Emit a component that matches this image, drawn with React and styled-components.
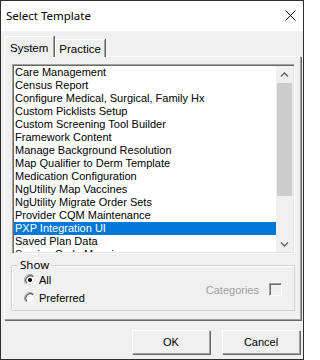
import React, { useState } from 'react';
import styled, { createGlobalStyle } from 'styled-components';

const templates = [
  'Care Management',
  'Census Report',
  'Configure Medical, Surgical, Family Hx',
  'Custom Picklists Setup',
  'Custom Screening Tool Builder',
  'Framework Content',
  'Manage Background Resolution',
  'Map Qualifier to Derm Template',
  'Medication Configuration',
  'NgUtility Map Vaccines',
  'NgUtility Migrate Order Sets',
  'Provider CQM Maintenance',
  'PXP Integration UI',
  'Saved Plan Data',
  'Service Code Mapping',
];

const GlobalStyle = createGlobalStyle`
  html, body {
    margin: 0;
    padding: 0;
    background: #ffffff;
  }
  * {
    box-sizing: border-box;
  }
`;

const Window = styled.div`
  width: 304px;
  height: 360px;
  border: 1px solid #2e2e2e;
  display: flex;
  flex-direction: column;
  background: #f0f0f0;
  font-family: 'Liberation Sans', Arial, sans-serif;
  font-size: 11px;
  color: #000;
  overflow: hidden;
`;

const TitleBar = styled.div`
  height: 30px;
  flex: 0 0 30px;
  background: #ffffff;
  display: flex;
  align-items: center;
  justify-content: space-between;
  padding: 0 7px 1px 5px;
`;

const Title = styled.span`
  font-family: 'Noto Sans', 'Open Sans', sans-serif;
  font-size: 11.5px;
  color: #000;
`;

const Body = styled.div`
  flex: 1;
  display: flex;
  flex-direction: column;
  padding: 5px 1px 0 3px;
`;

const TabStrip = styled.div`
  display: flex;
  align-items: flex-end;
  height: 21px;
  padding-left: 1px;
  position: relative;
  z-index: 1;
  margin-bottom: -1px;
`;

const Tab = styled.div`
  height: ${p => (p.$active ? '21px' : '18px')};
  padding: ${p => (p.$active ? '4px 5px 0 4px' : '2px 3px 0 3px')};
  background: #f0f0f0;
  border-top: 1px solid #ffffff;
  border-left: 1px solid #ffffff;
  border-right: 1px solid #a0a0a0;
  box-shadow: 1px 0 0 #696969;
  margin-right: 1px;
  font-size: 11.5px;
  line-height: 14px;
`;

const TabPanel = styled.div`
  height: 264px;
  border-top: 1px solid #ffffff;
  border-left: 1px solid #ffffff;
  border-right: 1px solid #a0a0a0;
  border-bottom: 1px solid #a0a0a0;
  box-shadow: 1px 1px 0 #696969;
  margin-right: 1px;
  padding: 7px 5px 0 7px;
  display: flex;
  flex-direction: column;
`;

const ListBox = styled.div`
  height: 190px;
  display: flex;
  background: #ffffff;
  border-top: 1px solid #a0a0a0;
  border-left: 1px solid #a0a0a0;
  border-right: 1px solid #ffffff;
  border-bottom: 1px solid #ffffff;
  box-shadow: inset 1px 1px 0 #696969, inset -1px -1px 0 #e3e3e3;
  padding: 1px;
`;

const Items = styled.div`
  flex: 1;
  overflow: hidden;
`;

const Item = styled.div`
  height: 13px;
  line-height: 13px;
  padding-left: 1px;
  white-space: nowrap;
  overflow: hidden;
  background: ${p => (p.$selected ? '#0078d7' : 'transparent')};
  color: ${p => (p.$selected ? '#ffffff' : '#000000')};
  cursor: default;
`;

const ScrollBar = styled.div`
  width: 17px;
  background: #f0f0f0;
  display: flex;
  flex-direction: column;
`;

const ScrollArrow = styled.div`
  height: 17px;
  display: flex;
  align-items: center;
  justify-content: center;
`;

const ScrollTrack = styled.div`
  flex: 1;
  padding: 0 1px;
`;

const Thumb = styled.div`
  height: 113px;
  background: #cdcdcd;
`;

const GroupBox = styled.div`
  position: relative;
  margin: 11px 0 0 -1px;
  height: 46px;
  border: 1px solid #d0d0d0;
  box-shadow: inset 1px 1px 0 #ffffff;
  display: flex;
  align-items: center;
  justify-content: space-between;
  padding: 4px 12px 2px 12px;
`;

const Legend = styled.span`
  position: absolute;
  top: -8px;
  left: 6px;
  padding: 0 2px;
  background: #f0f0f0;
  font-family: 'Noto Sans', 'Open Sans', sans-serif;
  font-size: 11.5px;
  line-height: 14px;
`;

const RadioColumn = styled.div`
  display: flex;
  flex-direction: column;
  gap: 5px;
`;

const RadioRow = styled.label`
  display: flex;
  align-items: center;
  gap: 3px;
  height: 13px;
  font-size: 11px;
`;

const CheckRow = styled.div`
  display: flex;
  align-items: center;
  gap: 10px;
  color: #a0a0a0;
  font-size: 11px;
  margin-top: 1px;
`;

const CheckBoxBox = styled.span`
  width: 13px;
  height: 13px;
  border-top: 1px solid #a0a0a0;
  border-left: 1px solid #a0a0a0;
  border-right: 1px solid #ffffff;
  border-bottom: 1px solid #ffffff;
  box-shadow: inset 1px 1px 0 #696969;
  background: #f0f0f0;
`;

const ButtonRow = styled.div`
  display: flex;
  justify-content: flex-end;
  gap: 12px;
  padding: 10px 2px 0 0;
`;

const Button = styled.button`
  width: 78px;
  height: 24px;
  background: #f0f0f0;
  border-top: 1px solid #ffffff;
  border-left: 1px solid #ffffff;
  border-right: 1px solid #a0a0a0;
  border-bottom: 1px solid #a0a0a0;
  box-shadow: 1px 1px 0 #696969;
  font-family: 'Liberation Sans', Arial, sans-serif;
  font-size: 11px;
  color: #000;
  padding: 0;
`;

const Radio = ({ checked }) => (
  <svg width="12" height="12" viewBox="0 0 12 12">
    <circle cx="6" cy="6" r="5.5" fill="#ffffff" />
    <path d="M2.1 9.9 A5.5 5.5 0 0 1 9.9 2.1" fill="none" stroke="#a0a0a0" strokeWidth="1" />
    <path d="M2.9 9.1 A4.4 4.4 0 0 1 9.1 2.9" fill="none" stroke="#505050" strokeWidth="1.1" />
    <path d="M10.2 3.4 A5.2 5.2 0 0 1 3.4 10.2" fill="none" stroke="#e3e3e3" strokeWidth="1" />
    {checked && <circle cx="6" cy="6" r="2.1" fill="#000000" />}
  </svg>
);

const Chevron = ({ down }) => (
  <svg width="9" height="6" viewBox="0 0 9 6">
    <path
      d={down ? 'M1 1.5 L4.5 5 L8 1.5' : 'M1 4.5 L4.5 1 L8 4.5'}
      fill="none"
      stroke="#606060"
      strokeWidth="1.3"
    />
  </svg>
);

const CloseIcon = () => (
  <svg width="11" height="11" viewBox="0 0 11 11">
    <path d="M0.5 0.5 L10.5 10.5 M10.5 0.5 L0.5 10.5" stroke="#000" strokeWidth="1" />
  </svg>
);

const App = () => {
  const [selected, setSelected] = useState(12);
  const [show, setShow] = useState('all');

  return (
    <>
      <GlobalStyle />
      <Window>
        <TitleBar>
          <Title>Select Template</Title>
          <CloseIcon />
        </TitleBar>
        <Body>
          <TabStrip>
            <Tab $active>System</Tab>
            <Tab>Practice</Tab>
          </TabStrip>
          <TabPanel>
            <ListBox>
              <Items>
                {templates.map((t, i) => (
                  <Item key={t} $selected={i === selected} onClick={() => setSelected(i)}>
                    {t}
                  </Item>
                ))}
              </Items>
              <ScrollBar>
                <ScrollArrow>
                  <Chevron />
                </ScrollArrow>
                <ScrollTrack>
                  <Thumb />
                </ScrollTrack>
                <ScrollArrow>
                  <Chevron down />
                </ScrollArrow>
              </ScrollBar>
            </ListBox>
            <GroupBox>
              <Legend>Show</Legend>
              <RadioColumn>
                <RadioRow onClick={() => setShow('all')}>
                  <Radio checked={show === 'all'} />
                  All
                </RadioRow>
                <RadioRow onClick={() => setShow('preferred')}>
                  <Radio checked={show === 'preferred'} />
                  Preferred
                </RadioRow>
              </RadioColumn>
              <CheckRow>
                Categories
                <CheckBoxBox />
              </CheckRow>
            </GroupBox>
          </TabPanel>
          <ButtonRow>
            <Button>OK</Button>
            <Button>Cancel</Button>
          </ButtonRow>
        </Body>
      </Window>
    </>
  );
};

export default App;
